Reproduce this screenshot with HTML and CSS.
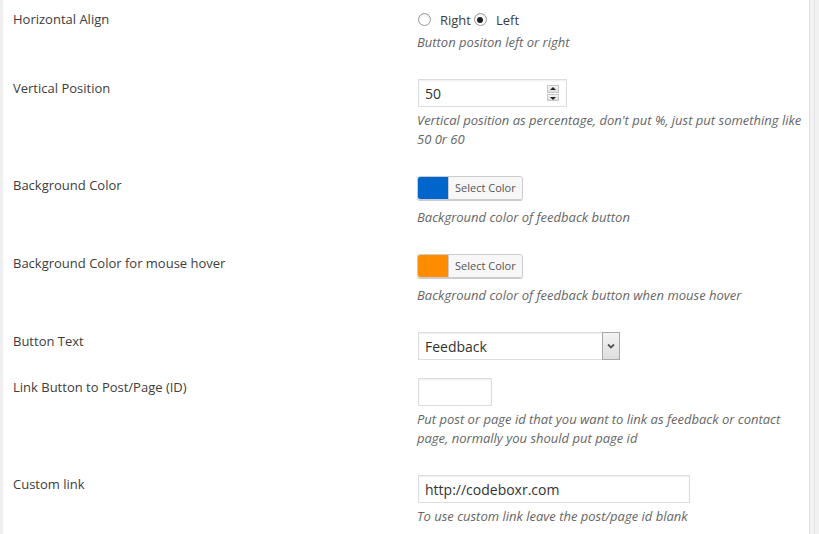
FILE: index.html
```html
<!DOCTYPE html>
<html>
<head>
<meta charset="utf-8">
<link rel="stylesheet" href="styles.css">
</head>
<body>
<div class="frame">
  <div class="panel">
    <div class="row">
      <div class="label">Horizontal Align</div>
      <div class="field">
        <div class="radios">
          <span class="radio"></span><span class="rlabel">Right</span>
          <span class="radio checked"></span><span class="rlabel">Left</span>
        </div>
        <p class="desc">Button positon left or right</p>
      </div>
    </div>
    <div class="row">
      <div class="label">Vertical Position</div>
      <div class="field">
        <div class="input num"><span>50</span>
          <span class="spin"><span class="up"></span><span class="down"></span></span>
        </div>
        <p class="desc">Vertical position as percentage, don't put %, just put something like<br>50 0r 60</p>
      </div>
    </div>
    <div class="row">
      <div class="label">Background Color</div>
      <div class="field">
        <div class="colorbtn"><span class="swatch blue"></span><span class="ctext">Select Color</span></div>
        <p class="desc">Background color of feedback button</p>
      </div>
    </div>
    <div class="row">
      <div class="label">Background Color for mouse hover</div>
      <div class="field">
        <div class="colorbtn"><span class="swatch orange"></span><span class="ctext">Select Color</span></div>
        <p class="desc">Background color of feedback button when mouse hover</p>
      </div>
    </div>
    <div class="row short">
      <div class="label">Button Text</div>
      <div class="field">
        <div class="input select"><span>Feedback</span>
          <span class="arrow"><svg width="8" height="6" viewBox="0 0 8 6"><path d="M1 1.5 L4 4.5 L7 1.5" fill="none" stroke="#555" stroke-width="1.8"/></svg></span>
        </div>
      </div>
    </div>
    <div class="row">
      <div class="label">Link Button to Post/Page (ID)</div>
      <div class="field">
        <div class="input small"></div>
        <p class="desc">Put post or page id that you want to link as feedback or contact<br>page, normally you should put page id</p>
      </div>
    </div>
    <div class="row">
      <div class="label">Custom link</div>
      <div class="field">
        <div class="input wide"><span>http://codeboxr.com</span></div>
        <p class="desc">To use custom link leave the post/page id blank</p>
      </div>
    </div>
  </div>
  <div class="scroll"></div>
</div>
</body>
</html>
```
FILE: styles.css
```css
html, body {
  margin: 0;
  padding: 0;
  background: #fff;
}
body {
  font-family: "Open Sans", "Noto Sans", sans-serif;
  font-size: 13px;
  color: #444;
}
.frame {
  display: flex;
  width: 819px;
  height: 534px;
  overflow: hidden;
}
.panel {
  flex: 1;
  border-left: 3px solid #eee;
  padding: 10px 0 0 10px;
  display: flex;
  flex-direction: column;
  gap: 27px;
}
.scroll {
  width: 9px;
  border-left: 1px solid #ddd;
  background: #f1f1f1;
  box-shadow: inset -4px 0 0 #f1f1f1, inset -5px 0 0 #e4e4e4;
}
.row {
  display: grid;
  grid-template-columns: 404px 1fr;
  align-items: start;
}
.row.short {
  margin-bottom: -9px;
}
.label {
  line-height: 19px;
  color: #3d3d3d;
}
.field {
  display: flex;
  flex-direction: column;
  align-items: flex-start;
}
.desc {
  margin: 4px 0 0;
  font-style: italic;
  color: #666;
  line-height: 19px;
}
.radios {
  display: flex;
  align-items: center;
  height: 19px;
  padding-left: 1px;
}
.radio {
  width: 11px;
  height: 11px;
  border: 1px solid #999;
  border-radius: 50%;
  box-shadow: inset 0 1px 2px rgba(0,0,0,.1);
  position: relative;
  background: #fff;
}
.radio.checked::after {
  content: "";
  position: absolute;
  left: 2.5px;
  top: 2.5px;
  width: 6px;
  height: 6px;
  border-radius: 50%;
  background: #222;
}
.rlabel {
  margin-left: 9px;
  margin-right: 3px;
  color: #3d3d3d;
}
.input {
  box-sizing: border-box;
  height: 28px;
  border: 1px solid #ddd;
  box-shadow: inset 0 1px 2px rgba(0,0,0,.07);
  background: #fff;
  font-size: 14px;
  color: #333;
  display: flex;
  align-items: center;
  padding-left: 6px;
  margin-left: 1px;
  position: relative;
}
.num { width: 149px; }
.small { width: 74px; }
.wide { width: 272px; }
.select { width: 202px; }
.spin {
  position: absolute;
  right: 7px;
  top: 5px;
  width: 12px;
  height: 16px;
  display: flex;
  flex-direction: column;
  gap: 1px;
}
.spin span {
  flex: 1;
  background: linear-gradient(#f4f4f4, #dcdcdc);
  border: 1px solid #c9c9c9;
  position: relative;
}
.spin .up::after, .spin .down::after {
  content: "";
  position: absolute;
  left: 2px;
  border-left: 3px solid transparent;
  border-right: 3px solid transparent;
}
.spin .up::after {
  top: 1px;
  border-bottom: 3px solid #222;
}
.spin .down::after {
  top: 2px;
  border-top: 3px solid #222;
}
.arrow {
  position: absolute;
  right: 0;
  top: 0;
  bottom: 0;
  width: 16px;
  border: 1px solid #a9a9a9;
  margin: -1px -1px -1px 0;
  background: linear-gradient(#f3f3f3, #dedede);
  display: flex;
  align-items: center;
  justify-content: center;
}
.colorbtn {
  display: flex;
  height: 24px;
  box-sizing: border-box;
  border: 1px solid #ccc;
  border-radius: 3px;
  overflow: hidden;
  margin-bottom: 4px;
  box-shadow: 0 1px 0 #ccc;
}
.swatch {
  width: 30px;
}
.swatch.blue { background: #0066cc; }
.swatch.orange { background: #ff8c00; }
.ctext {
  background: #f7f7f7;
  border-left: 1px solid #ccc;
  font-size: 11px;
  color: #555;
  line-height: 22px;
  padding: 0 6px 0 6px;
}
```
